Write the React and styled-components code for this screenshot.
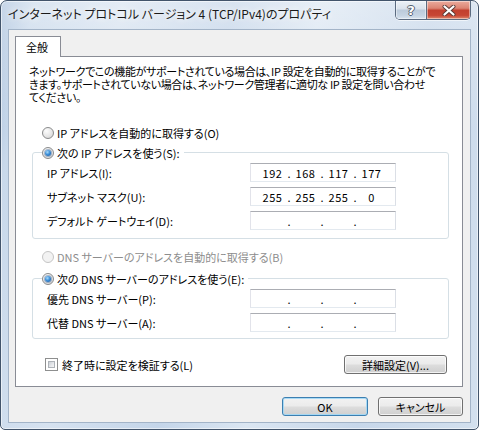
import React from "react";
import styled, { createGlobalStyle } from "styled-components";

const Global = createGlobalStyle`
  html, body { margin: 0; padding: 0; background: #fff; }
  body {
    font-family: "Noto Sans CJK JP", "Noto Sans", sans-serif;
    font-size: 11px;
    color: #000;
    font-feature-settings: "palt";
  }
  * { box-sizing: border-box; }
`;

const Window = styled.div`
  width: 479px;
  height: 430px;
  border: 1px solid #42546b;
  border-radius: 7px 7px 5px 5px;
  background:
    linear-gradient(180deg, rgba(255,255,255,0.35) 0%, rgba(255,255,255,0) 30%),
    linear-gradient(100deg, #a9c0dc 0%, #c9d9eb 6%, #d6e2f0 22%, #c4d5e9 42%, #dbe6f2 58%, #c7d7ea 78%, #d3e0ee 100%);
  box-shadow: inset 0 0 0 1px rgba(255, 255, 255, 0.55);
  display: flex;
  flex-direction: column;
  padding: 0 7px 6px 7px;
  overflow: hidden;
`;

const TitleBar = styled.div`
  height: 28px;
  display: flex;
  align-items: flex-start;
  flex-shrink: 0;
`;

const Title = styled.div`
  flex: 1;
  padding-top: 5px;
  font-size: 12px;
  line-height: 16px;
  color: #1a1a1a;
  white-space: nowrap;
  text-shadow: 0 0 6px rgba(255, 255, 255, 0.95), 0 0 10px rgba(255, 255, 255, 0.8);
`;

const CaptionGroup = styled.div`
  display: flex;
  height: 19px;
  border: 1px solid #5b6b80;
  border-top: none;
  border-radius: 0 0 5px 5px;
  overflow: hidden;
  box-shadow: 0 1px 0 rgba(255, 255, 255, 0.6);
`;

const CaptionButton = styled.div`
  width: ${(p) => p.$w}px;
  height: 100%;
  display: flex;
  align-items: center;
  justify-content: center;
  background: ${(p) =>
    p.$close
      ? "linear-gradient(180deg, #ebab9d 0%, #dc8473 40%, #c2402f 52%, #c74634 80%, #df8a70 100%)"
      : "linear-gradient(180deg, #edf2f7 0%, #dbe3ec 42%, #bccbdb 52%, #c6d4e3 80%, #d9e4ef 100%)"};
  border-left: ${(p) => (p.$close ? "1px solid #5b6b80" : "none")};
  box-shadow: inset 0 0 0 1px rgba(255, 255, 255, 0.45);
  font-family: "DejaVu Sans", sans-serif;
  font-weight: bold;
  font-size: 13px;
  color: #fff;
  text-shadow: 1px 0 0 #55606e, -1px 0 0 #55606e, 0 1px 0 #55606e, 0 -1px 0 #55606e;
`;

const Client = styled.div`
  flex: 1;
  background: #f0f0f0;
  border: 1px solid #a3b4c8;
  display: flex;
  flex-direction: column;
  padding: 6px 7px 0 6px;
`;

const TabStrip = styled.div`
  display: flex;
  height: 20px;
`;

const Tab = styled.div`
  width: 46px;
  height: 21px;
  background: #fff;
  border: 1px solid #898c95;
  border-bottom: none;
  display: flex;
  align-items: center;
  justify-content: center;
  padding-right: 2px;
  font-size: 11px;
  position: relative;
  z-index: 1;
`;

const Panel = styled.div`
  height: 331px;
  background: #fff;
  border: 1px solid #898c95;
  display: flex;
  flex-direction: column;
`;

const Intro = styled.div`
  margin: 8px 0 0 13px;
  line-height: 13px;
  letter-spacing: -0.35px;
`;

const Line = styled.span`
  display: block;
  white-space: nowrap;
`;

const OptionRow = styled.div`
  display: flex;
  align-items: center;
  height: 16px;
  margin: ${(p) => p.$m || "0"};
  color: ${(p) => (p.$disabled ? "#8d8d8d" : "#000")};
  white-space: nowrap;
`;

const Radio = styled.span`
  width: 12px;
  height: 12px;
  border-radius: 50%;
  margin-right: 3px;
  flex-shrink: 0;
  border: 1px solid ${(p) => (p.$disabled ? "#c5c5c5" : "#8a8b8c")};
  background: ${(p) =>
    p.$disabled
      ? "#f2f2f2"
      : "radial-gradient(circle at 35% 30%, #fdfdfd 0%, #e6e6e6 55%, #cfcfcf 100%)"};
  display: flex;
  align-items: center;
  justify-content: center;
  &::after {
    content: "";
    display: ${(p) => (p.$checked ? "block" : "none")};
    width: 6px;
    height: 6px;
    border-radius: 50%;
    background: radial-gradient(circle at 40% 35%, #a9dcfb 0%, #3d8fd8 45%, #0f4f97 100%);
    box-shadow: 0 0 0 1px rgba(20, 70, 130, 0.35);
  }
`;

const Group = styled.div`
  margin: ${(p) => p.$m} 13px 0 16px;
  border: 1px solid #d5dfe5;
  border-radius: 3px;
  padding-bottom: ${(p) => p.$pb}px;
`;

const Legend = styled.div`
  margin: -8px 0 0 9px;
  height: 16px;
  width: fit-content;
  padding-right: 4px;
  background: #fff;
  display: flex;
  align-items: center;
  white-space: nowrap;
`;

const FieldRow = styled.div`
  display: flex;
  align-items: center;
  height: 19px;
  margin-top: ${(p) => p.$mt}px;
  padding-left: 14px;
`;

const Label = styled.div`
  width: 203px;
  white-space: nowrap;
`;

const IpBox = styled.div`
  width: 146px;
  height: 19px;
  background: #fff;
  border: 1px solid;
  border-color: #abadb3 #dbdfe6 #e3e9ef #e2e3ea;
  display: flex;
  align-items: center;
  padding-left: 9px;
`;

const Octet = styled.span`
  width: 25px;
  text-align: center;
  letter-spacing: 0.5px;
`;

const Dot = styled.span`
  width: 8px;
  text-align: center;
`;

const BottomRow = styled.div`
  display: flex;
  align-items: center;
  justify-content: space-between;
  margin: 16px 15px 0 29px;
`;

const CheckRow = styled.div`
  display: flex;
  align-items: center;
  white-space: nowrap;
`;

const Check = styled.span`
  width: 13px;
  height: 13px;
  border: 1px solid #8e8f8f;
  background: #fff;
  padding: 2px;
  margin-right: 4px;
  display: flex;
  &::after {
    content: "";
    flex: 1;
    border: 1px solid #aeb3b9;
    background: linear-gradient(135deg, #cbcfd5 0%, #e7e9ec 60%, #f6f6f6 100%);
  }
`;

const Button = styled.div`
  width: ${(p) => p.$w}px;
  height: 19px;
  border-radius: 3px;
  border: 1px solid ${(p) => (p.$default ? "#3c7fb1" : "#707070")};
  background: linear-gradient(180deg, #f2f2f2 0%, #ebebeb 48%, #dddddd 52%, #cfcfcf 100%);
  box-shadow: inset 0 0 0 1px ${(p) => (p.$default ? "rgba(160, 215, 245, 0.9)" : "rgba(255,255,255,0.75)")};
  display: flex;
  align-items: center;
  justify-content: center;
  white-space: nowrap;
`;

const Footer = styled.div`
  display: flex;
  justify-content: flex-end;
  gap: 10px;
  margin-top: 10px;
`;

function IpField({ value }) {
  const parts = value ? value.split(".") : ["", "", "", ""];
  const out = [];
  parts.forEach((p, i) => {
    out.push(<Octet key={"o" + i}>{p}</Octet>);
    if (i < 3) out.push(<Dot key={"d" + i}>.</Dot>);
  });
  return <IpBox>{out}</IpBox>;
}

function CloseGlyph() {
  return (
    <svg width="14" height="11" viewBox="0 0 14 11">
      <path d="M2.5 1.5 L11.5 9.5 M11.5 1.5 L2.5 9.5" stroke="#5a3a36" strokeWidth="4" strokeLinecap="round" />
      <path d="M2.5 1.5 L11.5 9.5 M11.5 1.5 L2.5 9.5" stroke="#fff" strokeWidth="2.2" strokeLinecap="round" />
    </svg>
  );
}

export default function App() {
  return (
    <>
      <Global />
      <Window>
        <TitleBar>
          <Title>インターネット プロトコル バージョン 4 (TCP/IPv4)のプロパティ</Title>
          <CaptionGroup>
            <CaptionButton $w={30}>?</CaptionButton>
            <CaptionButton $w={44} $close>
              <CloseGlyph />
            </CaptionButton>
          </CaptionGroup>
        </TitleBar>
        <Client>
          <TabStrip>
            <Tab>全般</Tab>
          </TabStrip>
          <Panel>
            <Intro>
              <Line>ネットワークでこの機能がサポートされている場合は、IP 設定を自動的に取得することがで</Line>
              <Line>きます。サポートされていない場合は、ネットワーク管理者に適切な IP 設定を問い合わせ</Line>
              <Line>てください。</Line>
            </Intro>
            <OptionRow $m="21px 0 0 26px">
              <Radio />
              IP アドレスを自動的に取得する(O)
            </OptionRow>
            <Group $m="11px" $pb={8}>
              <Legend>
                <Radio $checked />
                次の IP アドレスを使う(S):
              </Legend>
              <FieldRow $mt={2}>
                <Label>IP アドレス(I):</Label>
                <IpField value="192.168.117.177" />
              </FieldRow>
              <FieldRow $mt={5}>
                <Label>サブネット マスク(U):</Label>
                <IpField value="255.255.255.0" />
              </FieldRow>
              <FieldRow $mt={5}>
                <Label>デフォルト ゲートウェイ(D):</Label>
                <IpField />
              </FieldRow>
            </Group>
            <OptionRow $m="10px 0 0 26px" $disabled>
              <Radio $disabled />
              DNS サーバーのアドレスを自動的に取得する(B)
            </OptionRow>
            <Group $m="13px" $pb={6}>
              <Legend>
                <Radio $checked />
                次の DNS サーバーのアドレスを使う(E):
              </Legend>
              <FieldRow $mt={2}>
                <Label>優先 DNS サーバー(P):</Label>
                <IpField />
              </FieldRow>
              <FieldRow $mt={5}>
                <Label>代替 DNS サーバー(A):</Label>
                <IpField />
              </FieldRow>
            </Group>
            <BottomRow>
              <CheckRow>
                <Check />
                終了時に設定を検証する(L)
              </CheckRow>
              <Button $w={103}>詳細設定(V)...</Button>
            </BottomRow>
          </Panel>
          <Footer>
            <Button $w={86} $default>OK</Button>
            <Button $w={85}>キャンセル</Button>
          </Footer>
        </Client>
      </Window>
    </>
  );
}
